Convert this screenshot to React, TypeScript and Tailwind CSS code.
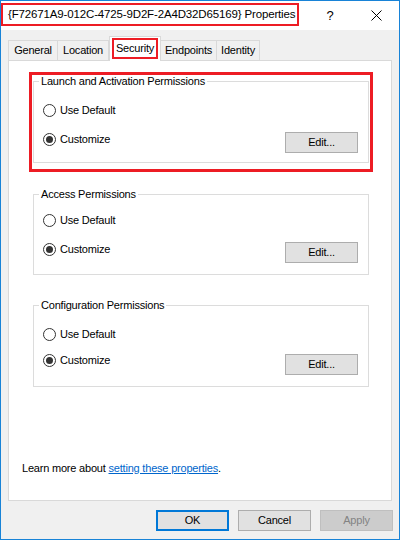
import React from 'react';

const Radio: React.FC<{ checked?: boolean; label: string }> = ({ checked, label }) => (
  <div className="flex items-center h-[20px] gap-[4px]">
    <span className="w-[13px] h-[13px] rounded-full border border-[#333333] bg-white flex items-center justify-center">
      {checked && <span className="w-[7px] h-[7px] rounded-full bg-[#333333]"></span>}
    </span>
    <span>{label}</span>
  </div>
);

const EditButton: React.FC = () => (
  <button className="w-[73px] h-[21px] bg-[#e1e1e1] border border-[#adadad] flex items-center justify-center text-black">
    Edit...
  </button>
);

interface GroupProps {
  title: string;
  firstTop: string;
  rowGap: string;
  btnTop: string;
  bottom: string;
  className?: string;
}

const Group: React.FC<GroupProps> = ({ title, firstTop, rowGap, btnTop, bottom, className }) => (
  <fieldset className={`border border-[#dcdcdc] pl-[5px] pr-[10px] ${bottom} ${className ?? ''}`}>
    <legend className="px-[2px] leading-[13px]">{title}</legend>
    <div className={`pl-[4px] ${firstTop}`}>
      <Radio label="Use Default" />
      <div className={`flex justify-between items-start ${rowGap}`}>
        <Radio checked label="Customize" />
        <div className={btnTop}>
          <EditButton />
        </div>
      </div>
    </div>
  </fieldset>
);

export default function App() {
  const tabs = [
    { name: 'General', w: 'w-[50px]' },
    { name: 'Location', w: 'w-[52px]' },
    { name: 'Security', w: 'w-[52px]', active: true },
    { name: 'Endpoints', w: 'w-[57px]' },
    { name: 'Identity', w: 'w-[44px]' },
  ];

  return (
    <div className="w-[400px] h-[540px] border border-[#1883d7] flex flex-col bg-[#f0f0f0] text-[11px] tracking-[-0.2px] text-black font-['Liberation_Sans',Arial,sans-serif] overflow-hidden">
      {/* Title bar */}
      <div className="h-[29px] bg-white flex items-start shrink-0">
        <div className="mt-[2px] h-[23px] border-2 border-[#ed1c24] pl-[5px] pr-[2px] flex items-center text-[11.5px] tracking-[-0.15px]">
          {'{F72671A9-012C-4725-9D2F-2A4D32D65169} Properties'}
        </div>
        <div className="ml-auto flex h-full">
          <div className="w-[46px] flex items-center justify-center text-[13px]">?</div>
          <div className="w-[46px] flex items-center justify-center">
            <svg width="11" height="11" viewBox="0 0 11 11">
              <path d="M0.5 0.5 L10.5 10.5 M10.5 0.5 L0.5 10.5" stroke="#000" strokeWidth="1" />
            </svg>
          </div>
        </div>
      </div>

      {/* Tabs */}
      <div className="flex items-end pt-[6px] pl-[7px] shrink-0">
        {tabs.map((t) =>
          t.active ? (
            <div
              key={t.name}
              className={`${t.w} h-[25px] -mb-px relative z-10 bg-white border-l border-r border-t border-[#d9d9d9] flex justify-center pt-[1px]`}
            >
              <span className="h-[21px] px-[2px] border-2 border-[#ed1c24] flex items-center">{t.name}</span>
            </div>
          ) : (
            <div
              key={t.name}
              className={`${t.w} h-[20px] border-l border-r border-t border-[#d9d9d9] first:border-l -ml-px first:ml-0 flex items-center justify-center bg-[#f0f0f0]`}
            >
              {t.name}
            </div>
          )
        )}
      </div>

      {/* Tab panel */}
      <div className="flex-1 mx-[7px] bg-white border border-[#d9d9d9] flex flex-col">
        <div className="mt-[11px] ml-[20px] mr-[18px] border-[3px] border-[#ed1c24] px-[1px] pb-[6px]">
          <Group
            title="Launch and Activation Permissions"
            firstTop="mt-[12px]"
            rowGap="mt-[9px]"
            btnTop="mt-[3px]"
            bottom="pb-[9px]"
          />
        </div>
        <Group
          title="Access Permissions"
          firstTop="mt-[9px]"
          rowGap="mt-[9px]"
          btnTop="mt-[3px]"
          bottom="pb-[11px]"
          className="mt-[16px] ml-[24px] mr-[22px]"
        />
        <Group
          title="Configuration Permissions"
          firstTop="mt-[12px]"
          rowGap="mt-[6px]"
          btnTop="mt-[4px]"
          bottom="pb-[11px]"
          className="mt-[24px] ml-[24px] mr-[22px]"
        />

        <div className="mt-auto pb-[25px] pl-[13px] leading-[14px]">
          Learn more about{' '}
          <a className="text-[#0066cc] underline">setting these properties</a>.
        </div>
      </div>

      {/* Footer buttons */}
      <div className="h-[38px] shrink-0 flex justify-end items-start pt-[9px] pr-[6px] gap-[9px]">
        <button className="w-[73px] h-[21px] bg-[#e1e1e1] border-2 border-[#0078d7] flex items-center justify-center text-black">
          OK
        </button>
        <button className="w-[73px] h-[21px] bg-[#e1e1e1] border border-[#adadad] flex items-center justify-center text-black">
          Cancel
        </button>
        <button className="w-[73px] h-[21px] bg-[#cccccc] border border-[#bfbfbf] flex items-center justify-center text-[#838383]">
          Apply
        </button>
      </div>
    </div>
  );
}
